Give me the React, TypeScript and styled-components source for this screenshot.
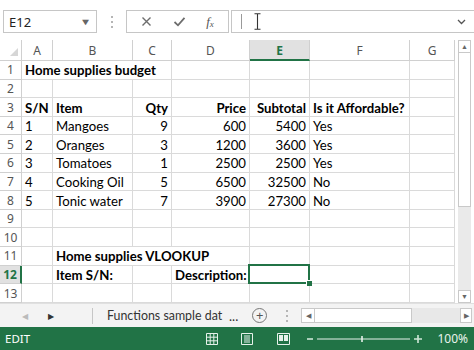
import styled, { createGlobalStyle } from 'styled-components';

const GlobalStyle = createGlobalStyle`
  html, body {
    margin: 0;
    padding: 0;
    background: #ffffff;
    overflow: hidden;
  }
  body {
    font-family: 'Noto Sans', 'Liberation Sans', sans-serif;
  }
`;

const GREEN = '#217346';
const GRID = '#dadada';
const HEAD_LINE = '#d0d0d0';

const Window = styled.div`
  width: 474px;
  height: 350px;
  display: flex;
  flex-direction: column;
  background: #fff;
`;

/* ---------- formula bar ---------- */

const FormulaBar = styled.div`
  height: 40px;
  display: flex;
  align-items: flex-start;
  padding: 10px 0 0 3px;
  box-sizing: border-box;
`;

const NameBox = styled.div`
  width: 94px;
  height: 23px;
  box-sizing: border-box;
  border: 1px solid #c6c6c6;
  display: flex;
  align-items: center;
  justify-content: space-between;
  padding: 0 6px 0 5px;
  font-size: 13px;
  color: #222;
`;

const Caret = styled.span`
  font-size: 9px;
  color: #666;
  transform: scaleX(1.3);
`;

const Grip = styled.div<{ $w?: number; $ml?: number }>`
  width: ${(p) => p.$w ?? 29}px;
  margin-left: ${(p) => p.$ml ?? 0}px;
  height: 23px;
  display: flex;
  flex-direction: column;
  align-items: center;
  justify-content: center;
  gap: 3px;

  & > i {
    width: 2px;
    height: 2px;
    background: #b5b5b5;
  }
`;

const FuncBox = styled.div`
  width: 103px;
  height: 23px;
  box-sizing: border-box;
  border: 1px solid #c6c6c6;
  display: flex;
  align-items: center;
  justify-content: space-around;
  padding: 0 4px;
  color: #707070;
`;

const Fx = styled.span`
  font-family: 'Liberation Serif', serif;
  font-style: italic;
  font-size: 13px;
  color: #555;

  & sub {
    font-size: 9px;
    vertical-align: -1px;
  }
`;

const FormulaInput = styled.div`
  flex: 1;
  height: 23px;
  margin-left: 2px;
  box-sizing: border-box;
  border: 1px solid #c6c6c6;
  border-right: none;
  display: flex;
  align-items: center;
  padding: 0 8px 0 9px;
  gap: 12px;
`;

const TextCaret = styled.i`
  width: 1px;
  height: 15px;
  background: #9a9a9a;
`;

const Spacer = styled.div`
  flex: 1;
`;

/* ---------- sheet ---------- */

const Main = styled.div`
  display: flex;
  height: 263px;
`;

const Sheet = styled.div`
  width: 455px;
  display: grid;
  grid-template-columns: 22px 31px 80px 39px 78px 60px 100px 45px;
  grid-template-rows: 21px repeat(13, 18.62px);
  font-family: 'Lato', 'Liberation Sans', sans-serif;
  font-size: 13.2px;
  color: #000;
`;

const Corner = styled.div`
  border-right: 1px solid ${HEAD_LINE};
  border-bottom: 1px solid ${HEAD_LINE};
  position: relative;

  &::after {
    content: '';
    position: absolute;
    right: 3px;
    bottom: 4px;
    border-style: solid;
    border-width: 0 0 8px 8px;
    border-color: transparent transparent #d6d6d6 transparent;
  }
`;

const ColHead = styled.div<{ $active?: boolean }>`
  display: flex;
  align-items: center;
  justify-content: center;
  font-family: 'Noto Sans', sans-serif;
  font-size: 12px;
  color: ${(p) => (p.$active ? GREEN : '#555')};
  font-weight: ${(p) => (p.$active ? 700 : 400)};
  background: ${(p) => (p.$active ? '#e1e1e1' : '#fff')};
  border-right: 1px solid ${HEAD_LINE};
  border-bottom: ${(p) => (p.$active ? `2px solid ${GREEN}` : `1px solid ${HEAD_LINE}`)};
  padding-top: ${(p) => (p.$active ? '1px' : '0')};
`;

const RowHead = styled.div<{ $active?: boolean }>`
  display: flex;
  align-items: center;
  justify-content: center;
  font-family: 'Noto Sans', sans-serif;
  font-size: 12px;
  color: ${(p) => (p.$active ? GREEN : '#555')};
  font-weight: ${(p) => (p.$active ? 700 : 400)};
  background: ${(p) => (p.$active ? '#e1e1e1' : '#fff')};
  border-bottom: 1px solid ${HEAD_LINE};
  border-right: ${(p) => (p.$active ? `2px solid ${GREEN}` : `1px solid ${HEAD_LINE}`)};
`;

const Cell = styled.div<{ $span?: number; $right?: boolean; $bold?: boolean }>`
  grid-column: span ${(p) => p.$span ?? 1};
  display: flex;
  align-items: center;
  justify-content: ${(p) => (p.$right ? 'flex-end' : 'flex-start')};
  padding: 1px 3px 0 3px;
  box-sizing: border-box;
  white-space: nowrap;
  overflow: hidden;
  font-weight: ${(p) => (p.$bold ? 700 : 400)};
  border-right: 1px solid ${GRID};
  border-bottom: 1px solid ${GRID};
`;

const ActiveCell = styled(Cell)`
  position: relative;
  overflow: visible;

  &::before {
    content: '';
    position: absolute;
    left: -2px;
    top: -2px;
    right: -1px;
    bottom: -1px;
    border: 2px solid ${GREEN};
  }

  &::after {
    content: '';
    position: absolute;
    right: -3px;
    bottom: -3px;
    width: 5px;
    height: 5px;
    background: ${GREEN};
    border: 1px solid #fff;
    border-right: none;
    border-bottom: none;
  }
`;

/* ---------- scroll bars ---------- */

const VScroll = styled.div`
  width: 13px;
  margin-left: 3px;
  display: flex;
  flex-direction: column;
  background: #eaeaea;
`;

const ArrowBtn = styled.div<{ $w?: number; $h?: number }>`
  width: ${(p) => (p.$w ? `${p.$w}px` : 'auto')};
  height: ${(p) => p.$h ?? 13}px;
  background: #fff;
  border: 1px solid #c9c9c9;
  box-sizing: border-box;
  display: flex;
  align-items: center;
  justify-content: center;
  font-size: 7px;
  color: #666;
`;

const VThumb = styled.div`
  height: 154px;
  background: #fff;
  border: 1px solid #c9c9c9;
  border-top: none;
  box-sizing: border-box;
`;

/* ---------- sheet tabs ---------- */

const TabsBar = styled.div`
  height: 24px;
  display: flex;
  align-items: center;
  padding-left: 12px;
  background: #f3f3f3;
  border-top: 1px solid #e0e0e0;
  box-sizing: border-box;
  font-family: 'Noto Sans', sans-serif;
  color: #444;
`;

const NavArrow = styled.span<{ $dim?: boolean }>`
  width: 26px;
  text-align: center;
  font-size: 8px;
  color: ${(p) => (p.$dim ? '#bbb' : '#333')};
`;

const TabDivider = styled.i`
  width: 1px;
  height: 16px;
  background: #c6c6c6;
  margin: 0 14px 0 28px;
`;

const TabName = styled.span`
  font-family: 'Lato', 'Noto Sans', sans-serif;
  font-size: 12.4px;
  color: #333;
  width: 116px;
  white-space: nowrap;
`;

const Ellipsis = styled.span`
  font-family: 'Lato', 'Noto Sans', sans-serif;
  font-size: 13px;
  color: #333;
  margin-left: 6px;
`;

const AddSheet = styled.span`
  width: 13px;
  height: 13px;
  border: 1px solid #777;
  border-radius: 50%;
  display: flex;
  align-items: center;
  justify-content: center;
  font-size: 13px;
  line-height: 1;
  color: #555;
  margin-left: 14px;
`;

const HScroll = styled.div`
  display: flex;
  align-items: center;
  margin-left: 6px;
  width: 171px;
  height: 15px;
  background: #e8e8e8;
`;

const HThumb = styled.div`
  width: 97px;
  height: 15px;
  background: #fff;
  border: 1px solid #c9c9c9;
  border-left: none;
  box-sizing: border-box;
`;

/* ---------- status bar ---------- */

const StatusBar = styled.div`
  height: 23px;
  background: ${GREEN};
  color: #fff;
  display: flex;
  align-items: center;
  padding: 0 6px 0 5px;
  font-family: 'Noto Sans', sans-serif;
  font-size: 11.5px;
`;

const ZoomText = styled.span`
  margin-left: 12px;
  font-size: 12px;
  color: #e8f3ec;
`;

const ViewIcon = styled.svg<{ $gap: number }>`
  margin-left: ${(p) => p.$gap}px;
`;

type C = { t?: string; r?: boolean; b?: boolean; s?: number };

const rows: C[][] = [
  [{ t: 'Home supplies budget', b: true, s: 3 }, {}, {}, {}, {}],
  [{}, {}, {}, {}, {}, {}, {}],
  [
    { t: 'S/N', b: true },
    { t: 'Item', b: true },
    { t: 'Qty', b: true, r: true },
    { t: 'Price', b: true, r: true },
    { t: 'Subtotal', b: true, r: true },
    { t: 'Is it Affordable?', b: true },
    {},
  ],
];

const data: [string, string, string, string, string, string][] = [
  ['1', 'Mangoes', '9', '600', '5400', 'Yes'],
  ['2', 'Oranges', '3', '1200', '3600', 'Yes'],
  ['3', 'Tomatoes', '1', '2500', '2500', 'Yes'],
  ['4', 'Cooking Oil', '5', '6500', '32500', 'No'],
  ['5', 'Tonic water', '7', '3900', '27300', 'No'],
];

data.forEach((d) =>
  rows.push([
    { t: d[0] },
    { t: d[1] },
    { t: d[2], r: true },
    { t: d[3], r: true },
    { t: d[4], r: true },
    { t: d[5] },
    {},
  ])
);

rows.push([{}, {}, {}, {}, {}, {}, {}]);
rows.push([{}, {}, {}, {}, {}, {}, {}]);
rows.push([{}, { t: 'Home supplies VLOOKUP', b: true, s: 3 }, {}, {}, {}]);
rows.push([{}, { t: 'Item S/N:', b: true }, {}, { t: 'Description:', b: true }, { t: 'ACTIVE' }, {}, {}]);
rows.push([{}, {}, {}, {}, {}, {}, {}]);

const cols = ['A', 'B', 'C', 'D', 'E', 'F', 'G'];

export default function App() {
  return (
    <Window>
      <GlobalStyle />
      <FormulaBar>
        <NameBox>
          E12
          <Caret>▼</Caret>
        </NameBox>
        <Grip>
          <i />
          <i />
          <i />
        </Grip>
        <FuncBox>
          <svg width="11" height="11" viewBox="0 0 11 11">
            <path d="M1.5 1.5 L9.5 9.5 M9.5 1.5 L1.5 9.5" stroke="#6d6d6d" strokeWidth="1.4" fill="none" />
          </svg>
          <svg width="13" height="11" viewBox="0 0 13 11">
            <path d="M1.5 6 L5 9.3 L11.5 1.8" stroke="#6d6d6d" strokeWidth="1.8" fill="none" />
          </svg>
          <Fx>
            f<sub>x</sub>
          </Fx>
        </FuncBox>
        <FormulaInput>
          <TextCaret />
          <svg width="7" height="17" viewBox="0 0 7 17">
            <path d="M0.5 0.8 H6.5 M3.5 0.8 V16.2 M0.5 16.2 H6.5" stroke="#333" strokeWidth="1.1" fill="none" />
          </svg>
          <Spacer />
          <svg width="9" height="6" viewBox="0 0 9 6">
            <path d="M1 1 L4.5 4.5 L8 1" stroke="#555" strokeWidth="1.3" fill="none" />
          </svg>
        </FormulaInput>
      </FormulaBar>

      <Main>
        <Sheet>
          <Corner />
          {cols.map((c) => (
            <ColHead key={c} $active={c === 'E'}>
              {c}
            </ColHead>
          ))}
          {rows.map((row, i) => (
            <RowCells key={i} n={i + 1} row={row} />
          ))}
        </Sheet>
        <VScroll>
          <ArrowBtn>▲</ArrowBtn>
          <VThumb />
          <Spacer />
          <ArrowBtn>▼</ArrowBtn>
        </VScroll>
      </Main>

      <TabsBar>
        <NavArrow $dim>◀</NavArrow>
        <NavArrow>▶</NavArrow>
        <TabDivider />
        <TabName>Functions sample dat</TabName>
        <Ellipsis>...</Ellipsis>
        <AddSheet>+</AddSheet>
        <Grip $w={16} $ml={12}>
          <i />
          <i />
          <i />
        </Grip>
        <HScroll>
          <ArrowBtn $w={14} $h={15}>◀</ArrowBtn>
          <HThumb />
          <Spacer />
          <ArrowBtn $w={12} $h={15}>▶</ArrowBtn>
        </HScroll>
      </TabsBar>

      <StatusBar>
        EDIT
        <Spacer />
        <svg width="12" height="12" viewBox="0 0 12 12">
          <path
            d="M0.5 0.5 H11.5 V11.5 H0.5 Z M4.2 0.5 V11.5 M7.8 0.5 V11.5 M0.5 4.2 H11.5 M0.5 7.8 H11.5"
            stroke="#e6f1ea"
            strokeWidth="1"
            fill="none"
          />
        </svg>
        <ViewIcon $gap={23} width="12" height="12" viewBox="0 0 12 12">
          <path d="M0.5 0.5 H11.5 V11.5 H0.5 Z M3 3 H9 M3 5 H9 M3 7 H9 M3 9 H9" stroke="#e6f1ea" strokeWidth="1" fill="none" />
        </ViewIcon>
        <ViewIcon $gap={24} width="13" height="12" viewBox="0 0 13 12">
          <path d="M0.5 0.5 H12.5 V11.5 H0.5 Z" stroke="#e6f1ea" strokeWidth="1" fill="none" />
          <rect x="2" y="2" width="4" height="6" fill="#e6f1ea" />
          <rect x="7" y="2" width="4" height="6" fill="#e6f1ea" />
        </ViewIcon>
        <ViewIcon $gap={17} width="118" height="12" viewBox="0 0 118 12">
          <path d="M0 6 H6" stroke="#cfe6d7" strokeWidth="1.6" />
          <path d="M10 6 H103" stroke="#e6f1ea" strokeWidth="1" />
          <path d="M55 3 V9" stroke="#e6f1ea" strokeWidth="1.6" />
          <path d="M107 6 H115 M111 2 V10" stroke="#cfe6d7" strokeWidth="1.6" />
        </ViewIcon>
        <ZoomText>100%</ZoomText>
      </StatusBar>
    </Window>
  );
}

function RowCells({ n, row }: { n: number; row: C[] }) {
  const active = n === 12;
  return (
    <>
      <RowHead $active={active}>{n}</RowHead>
      {row.map((c, j) =>
        c.t === 'ACTIVE' ? (
          <ActiveCell key={j} />
        ) : (
          <Cell key={j} $span={c.s} $right={c.r} $bold={c.b}>
            {c.t}
          </Cell>
        )
      )}
    </>
  );
}
